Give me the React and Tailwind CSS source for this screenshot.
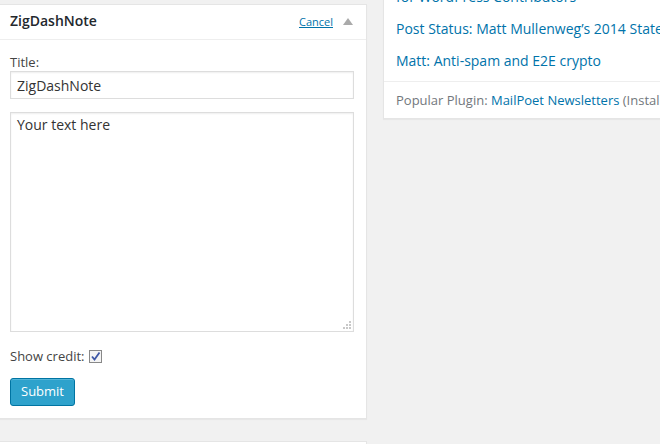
import React from "react";

export default function App() {
  const font = { fontFamily: '"Open Sans", "Noto Sans", sans-serif' };
  return (
    <div className="w-[660px] h-[444px] overflow-hidden bg-[#f1f1f1] text-[#444] flex items-start" style={font}>
      <div className="flex flex-col -ml-px">
        <div className="mt-[4px] w-[368px] bg-white border border-[#e5e5e5] shadow-[0_1px_1px_rgba(0,0,0,0.04)]">
          <div className="h-[35px] flex items-center border-b border-[#eee] pl-[10px] pr-[13px] pb-[2px]">
            <span className="text-[14px] font-semibold text-[#23282d] leading-none">ZigDashNote</span>
            <a className="ml-auto text-[11px] text-[#0073aa] underline leading-none">Cancel</a>
            <svg width="10" height="7" viewBox="0 0 10 7" className="ml-[10px]">
              <polygon points="5,0 10,7 0,7" fill="#aaa" />
            </svg>
          </div>
          <div className="pl-[10px] pr-[12px] pt-[13px] pb-[12px] flex flex-col">
            <label className="text-[13px] leading-[18px] text-[#444]">Title:</label>
            <div className="h-[28px] w-[344px] border border-[#ddd] shadow-[inset_0_1px_2px_rgba(0,0,0,0.07)] flex items-center px-[6px] text-[14px] text-[#333]">
              ZigDashNote
            </div>
            <div className="mt-[13px] h-[220px] w-[344px] border border-[#ddd] shadow-[inset_0_1px_2px_rgba(0,0,0,0.07)] relative px-[6px] pt-[2px] text-[14px] text-[#333] leading-[20px]">
              Your text here
              <svg width="10" height="10" viewBox="0 0 10 10" className="absolute right-[1px] bottom-[1px]">
                <rect x="7" y="1" width="2" height="2" fill="#c8c8c8" />
                <rect x="4" y="4" width="2" height="2" fill="#c8c8c8" />
                <rect x="7" y="4" width="2" height="2" fill="#c8c8c8" />
                <rect x="1" y="7" width="2" height="2" fill="#c8c8c8" />
                <rect x="4" y="7" width="2" height="2" fill="#c8c8c8" />
                <rect x="7" y="7" width="2" height="2" fill="#c8c8c8" />
              </svg>
            </div>
            <div className="mt-[15px] flex items-center text-[13px] text-[#444] leading-[18px]">
              <span>Show credit:</span>
              <span className="ml-[4px] w-[13px] h-[13px] border border-[#888] bg-[#f4f4f4] flex items-center justify-center">
                <svg width="11" height="11" viewBox="0 0 11 11">
                  <path d="M2 5.5 L4.5 8.5 L9.5 1.5" stroke="#3e57a6" strokeWidth="1.8" fill="none" />
                </svg>
              </span>
            </div>
            <div className="mt-[13px]">
              <button className="h-[28px] px-[10px] rounded-[3px] bg-[#2ea2cc] border border-[#0074a2] text-white text-[13px] shadow-[inset_0_1px_0_rgba(120,200,230,0.5)]">
                Submit
              </button>
            </div>
          </div>
        </div>
        <div className="mt-[22px] w-[368px] h-[40px] bg-white border border-[#e5e5e5]"></div>
      </div>
      <div className="ml-[16px] -mt-[16px] w-[300px] bg-white border border-[#e5e5e5] shadow-[0_1px_1px_rgba(0,0,0,0.04)] whitespace-nowrap">
        <div className="pl-[12px] pt-[2px] flex flex-col text-[14px] text-[#0073aa] leading-[20px]">
          <span className="h-[20px]">for WordPress Contributors</span>
          <span className="mt-[12px]">Post Status: Matt Mullenweg’s 2014 State of the Word</span>
          <span className="mt-[12px]">Matt: Anti-spam and E2E crypto</span>
        </div>
        <div className="mt-[10px] border-t border-[#eee] pl-[12px] pt-[9px] pb-[9px] text-[13px] leading-[18px] text-[#72777c]">
          Popular Plugin: <span className="text-[#0073aa]">MailPoet Newsletters</span> (Install)
        </div>
      </div>
    </div>
  );
}
